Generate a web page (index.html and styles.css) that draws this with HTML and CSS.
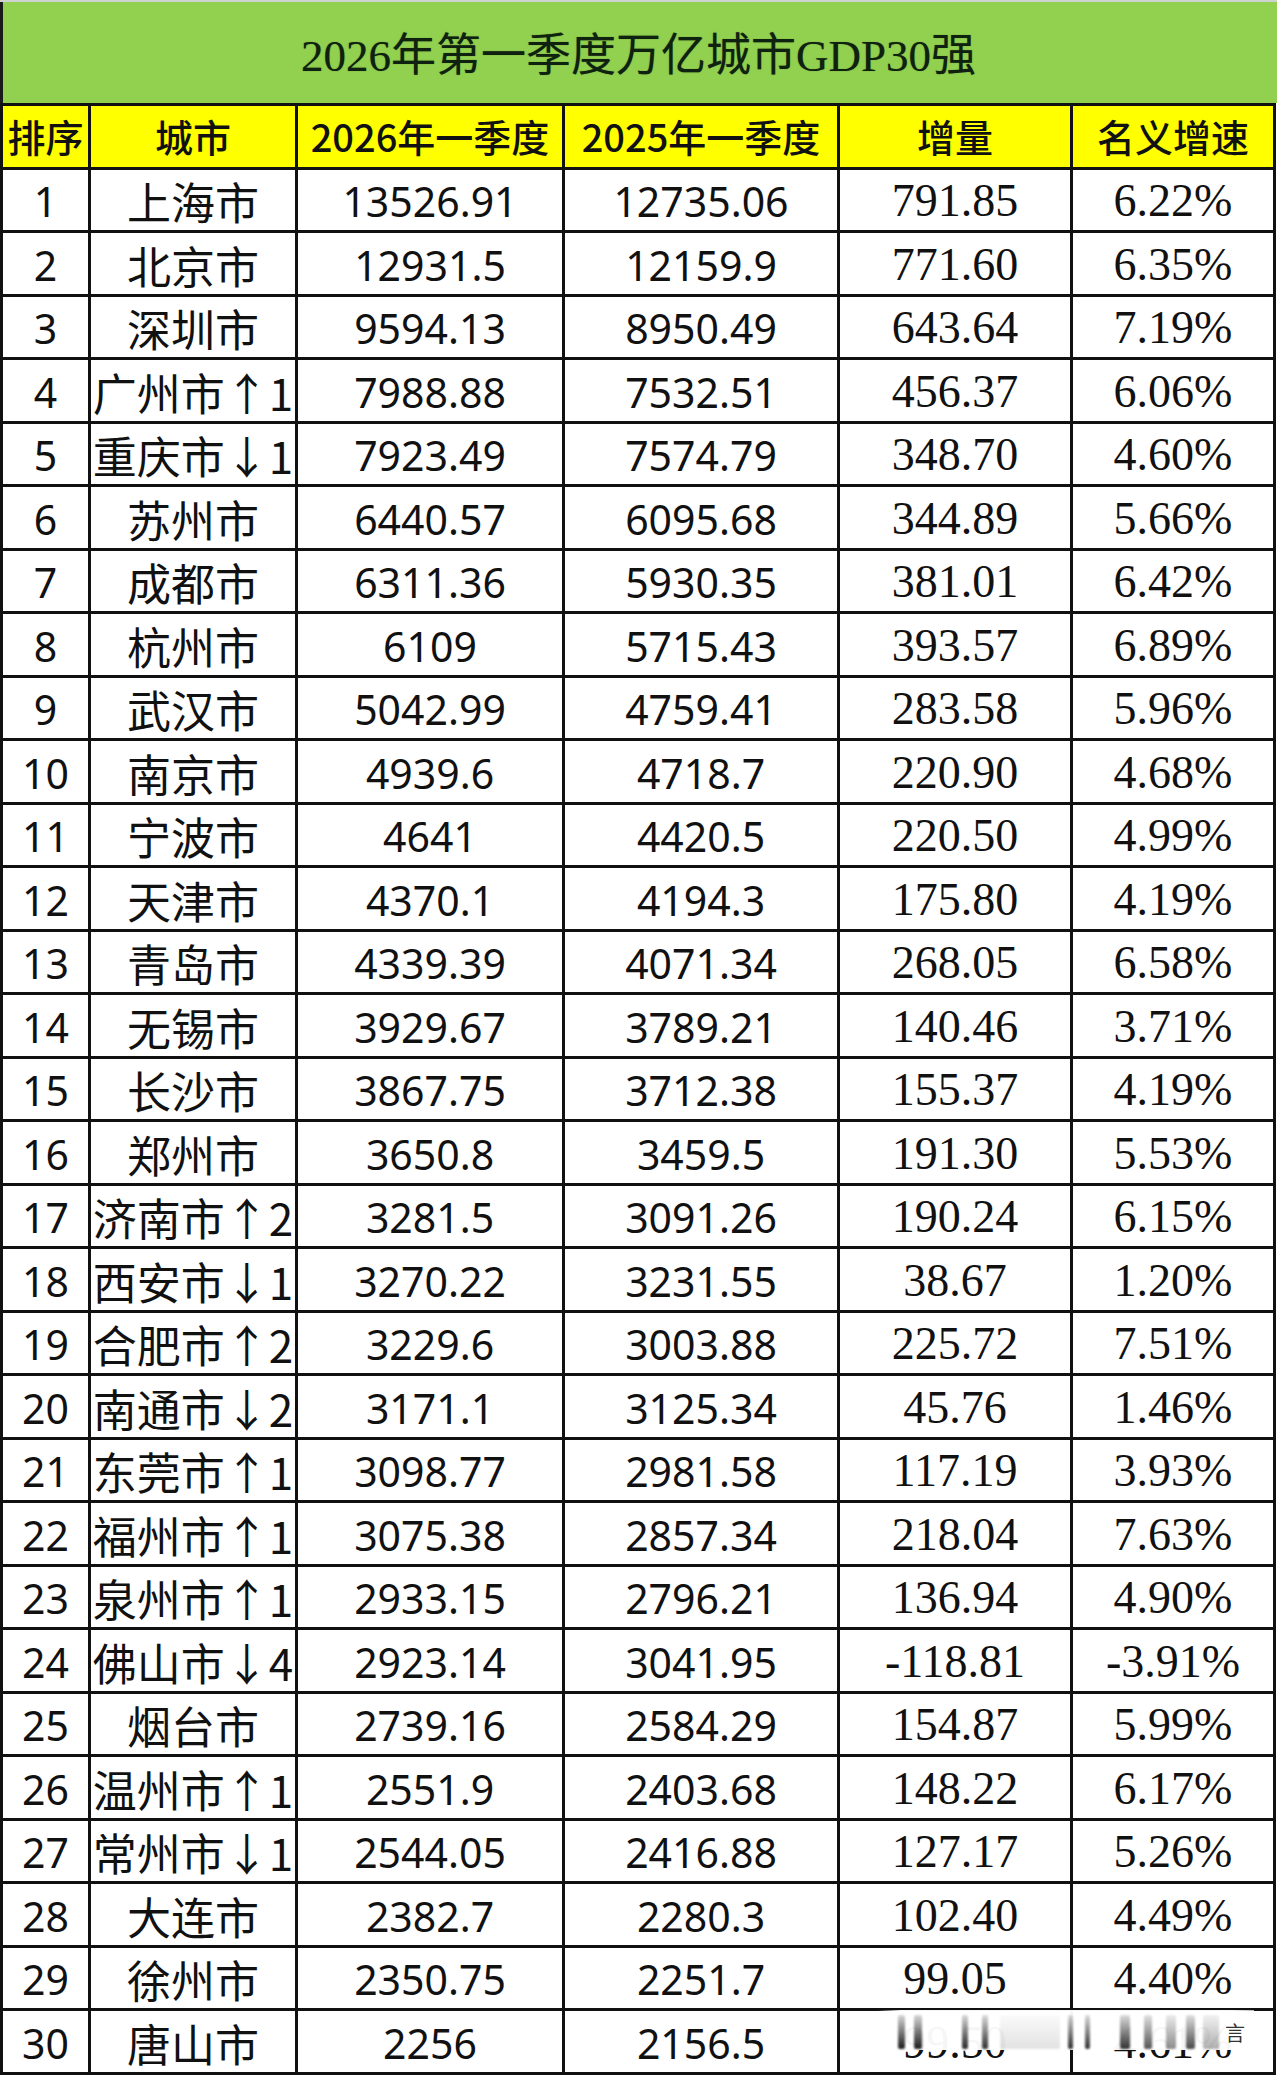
FILE: index.html
```html
<!DOCTYPE html>
<html lang="zh-CN">
<head>
<meta charset="utf-8">
<title>2026年第一季度万亿城市GDP30强</title>
<link rel="stylesheet" href="styles.css">
</head>
<body>
<div class="sheet">
  <div class="title">2026年第一季度万亿城市GDP30强</div>
  <table class="gdp">
    <colgroup>
      <col class="c-rank"><col class="c-city"><col class="c-y26"><col class="c-y25"><col class="c-inc"><col class="c-rate">
    </colgroup>
    <thead>
      <tr><th>排序</th><th>城市</th><th>2026年一季度</th><th>2025年一季度</th><th>增量</th><th>名义增速</th></tr>
    </thead>
    <tbody>
      <tr><td>1</td><td class="city">上海市</td><td>13526.91</td><td>12735.06</td><td class="serif">791.85</td><td class="serif">6.22%</td></tr>
      <tr><td>2</td><td class="city">北京市</td><td>12931.5</td><td>12159.9</td><td class="serif">771.60</td><td class="serif">6.35%</td></tr>
      <tr><td>3</td><td class="city">深圳市</td><td>9594.13</td><td>8950.49</td><td class="serif">643.64</td><td class="serif">7.19%</td></tr>
      <tr><td>4</td><td class="city">广州市↑1</td><td>7988.88</td><td>7532.51</td><td class="serif">456.37</td><td class="serif">6.06%</td></tr>
      <tr><td>5</td><td class="city">重庆市↓1</td><td>7923.49</td><td>7574.79</td><td class="serif">348.70</td><td class="serif">4.60%</td></tr>
      <tr><td>6</td><td class="city">苏州市</td><td>6440.57</td><td>6095.68</td><td class="serif">344.89</td><td class="serif">5.66%</td></tr>
      <tr><td>7</td><td class="city">成都市</td><td>6311.36</td><td>5930.35</td><td class="serif">381.01</td><td class="serif">6.42%</td></tr>
      <tr><td>8</td><td class="city">杭州市</td><td>6109</td><td>5715.43</td><td class="serif">393.57</td><td class="serif">6.89%</td></tr>
      <tr><td>9</td><td class="city">武汉市</td><td>5042.99</td><td>4759.41</td><td class="serif">283.58</td><td class="serif">5.96%</td></tr>
      <tr><td>10</td><td class="city">南京市</td><td>4939.6</td><td>4718.7</td><td class="serif">220.90</td><td class="serif">4.68%</td></tr>
      <tr><td>11</td><td class="city">宁波市</td><td>4641</td><td>4420.5</td><td class="serif">220.50</td><td class="serif">4.99%</td></tr>
      <tr><td>12</td><td class="city">天津市</td><td>4370.1</td><td>4194.3</td><td class="serif">175.80</td><td class="serif">4.19%</td></tr>
      <tr><td>13</td><td class="city">青岛市</td><td>4339.39</td><td>4071.34</td><td class="serif">268.05</td><td class="serif">6.58%</td></tr>
      <tr><td>14</td><td class="city">无锡市</td><td>3929.67</td><td>3789.21</td><td class="serif">140.46</td><td class="serif">3.71%</td></tr>
      <tr><td>15</td><td class="city">长沙市</td><td>3867.75</td><td>3712.38</td><td class="serif">155.37</td><td class="serif">4.19%</td></tr>
      <tr><td>16</td><td class="city">郑州市</td><td>3650.8</td><td>3459.5</td><td class="serif">191.30</td><td class="serif">5.53%</td></tr>
      <tr><td>17</td><td class="city">济南市↑2</td><td>3281.5</td><td>3091.26</td><td class="serif">190.24</td><td class="serif">6.15%</td></tr>
      <tr><td>18</td><td class="city">西安市↓1</td><td>3270.22</td><td>3231.55</td><td class="serif">38.67</td><td class="serif">1.20%</td></tr>
      <tr><td>19</td><td class="city">合肥市↑2</td><td>3229.6</td><td>3003.88</td><td class="serif">225.72</td><td class="serif">7.51%</td></tr>
      <tr><td>20</td><td class="city">南通市↓2</td><td>3171.1</td><td>3125.34</td><td class="serif">45.76</td><td class="serif">1.46%</td></tr>
      <tr><td>21</td><td class="city">东莞市↑1</td><td>3098.77</td><td>2981.58</td><td class="serif">117.19</td><td class="serif">3.93%</td></tr>
      <tr><td>22</td><td class="city">福州市↑1</td><td>3075.38</td><td>2857.34</td><td class="serif">218.04</td><td class="serif">7.63%</td></tr>
      <tr><td>23</td><td class="city">泉州市↑1</td><td>2933.15</td><td>2796.21</td><td class="serif">136.94</td><td class="serif">4.90%</td></tr>
      <tr><td>24</td><td class="city">佛山市↓4</td><td>2923.14</td><td>3041.95</td><td class="serif">-118.81</td><td class="serif">-3.91%</td></tr>
      <tr><td>25</td><td class="city">烟台市</td><td>2739.16</td><td>2584.29</td><td class="serif">154.87</td><td class="serif">5.99%</td></tr>
      <tr><td>26</td><td class="city">温州市↑1</td><td>2551.9</td><td>2403.68</td><td class="serif">148.22</td><td class="serif">6.17%</td></tr>
      <tr><td>27</td><td class="city">常州市↓1</td><td>2544.05</td><td>2416.88</td><td class="serif">127.17</td><td class="serif">5.26%</td></tr>
      <tr><td>28</td><td class="city">大连市</td><td>2382.7</td><td>2280.3</td><td class="serif">102.40</td><td class="serif">4.49%</td></tr>
      <tr><td>29</td><td class="city">徐州市</td><td>2350.75</td><td>2251.7</td><td class="serif">99.05</td><td class="serif">4.40%</td></tr>
      <tr><td>30</td><td class="city">唐山市</td><td>2256</td><td>2156.5</td><td class="serif">99.50</td><td class="serif">4.61%</td></tr>
    </tbody>
  </table>
  <div class="watermark" aria-hidden="true">
    <span class="streak s1"></span><span class="streak s2"></span><span class="streak s3"></span><span class="streak s4"></span><span class="streak s5"></span><span class="streak s6"></span><span class="streak s7"></span><span class="streak s8"></span><span class="streak s9"></span><span class="streak s10"></span><span class="streak s11"></span><span class="streak s12"></span>
    <span class="wm-glyph">言</span>
  </div>
</div>
</body>
</html>
```
FILE: styles.css
```css
html, body {
  margin: 0;
  padding: 0;
  background: #ffffff;
}
body {
  font-family: "Noto Sans", "Noto Sans CJK SC", sans-serif;
  color: #111;
  overflow: hidden;
}
.sheet {
  position: relative;
  width: 1277px;
  height: 2076px;
  overflow: hidden;
  border-top: 2px solid #cfd3cf;
  box-sizing: border-box;
}
.title {
  height: 101px;
  border-left: 3px solid #1a1a1a;
  background: #92d050;
  color: #0f220f;
  font-family: "Liberation Serif", "Noto Sans CJK SC", serif;
  font-size: 45px;
  line-height: 108px;
  text-align: center;
  padding-right: 3px;
  text-shadow: 0 0 1px rgba(10, 40, 10, 0.5);
}
.gdp {
  border-collapse: collapse;
  table-layout: fixed;
  width: 1276px;
}
.c-rank { width: 88px; }
.c-city { width: 207px; }
.c-y26 { width: 267px; }
.c-y25 { width: 275px; }
.c-inc { width: 233px; }
.c-rate { width: 203px; }
.gdp th, .gdp td {
  border: 3px solid #111;
  padding: 3px 0 0;
  text-align: center;
  vertical-align: middle;
  white-space: nowrap;
  height: 57.5px;
  line-height: 50px;
}
.gdp th {
  padding: 0;
  height: 60.5px;
  background: #ffff00;
  font-family: "Noto Sans CJK SC", sans-serif;
  font-weight: 500;
  font-size: 38px;
}
.gdp td {
  font-size: 41px;
}
.gdp td.city {
  font-family: "Noto Sans CJK SC", sans-serif;
  font-size: 44px;
}
.gdp td.serif {
  font-family: "Liberation Serif", serif;
  font-size: 46px;
}
.watermark {
  position: absolute;
  left: 878px;
  top: 2008px;
  width: 376px;
  height: 40px;
  display: flex;
  align-items: flex-end;
  padding-bottom: 1px;
  box-sizing: border-box;
  background: linear-gradient(90deg, rgba(255,255,255,0) 0%, rgba(255,255,255,0.96) 6%, rgba(255,255,255,0.96) 94%, rgba(255,255,255,0.7) 100%);
}
.streak {
  display: block;
  height: 34px;
  background: linear-gradient(180deg, rgba(60,60,60,0.2), rgba(15,15,15,0.95));
  filter: blur(1.3px);
  border-radius: 2px;
}
.s1 { width: 7px; margin-left: 20px; }
.s2 { width: 8px; margin-left: 9px; }
.s3 { width: 6px; margin-left: 40px; opacity: 0.95; }
.s4 { width: 6px; margin-left: 14px; opacity: 0.9; }
.s5 { width: 60px; margin-left: 12px; opacity: 0.12; }
.s6 { width: 5px; margin-left: 8px; opacity: 0.9; }
.s7 { width: 5px; margin-left: 12px; opacity: 0.9; }
.s8 { width: 10px; margin-left: 30px; opacity: 0.9; }
.s9 { width: 8px; margin-left: 14px; opacity: 0.75; }
.s10 { width: 10px; margin-left: 14px; opacity: 0.5; }
.s11 { width: 9px; margin-left: 10px; opacity: 0.8; }
.s12 { width: 16px; margin-left: 8px; opacity: 0.35; }
.wm-glyph {
  margin-left: 6px;
  font-family: "Noto Sans CJK SC", sans-serif;
  font-size: 20px;
  line-height: 32px;
  color: #333;
}
```
